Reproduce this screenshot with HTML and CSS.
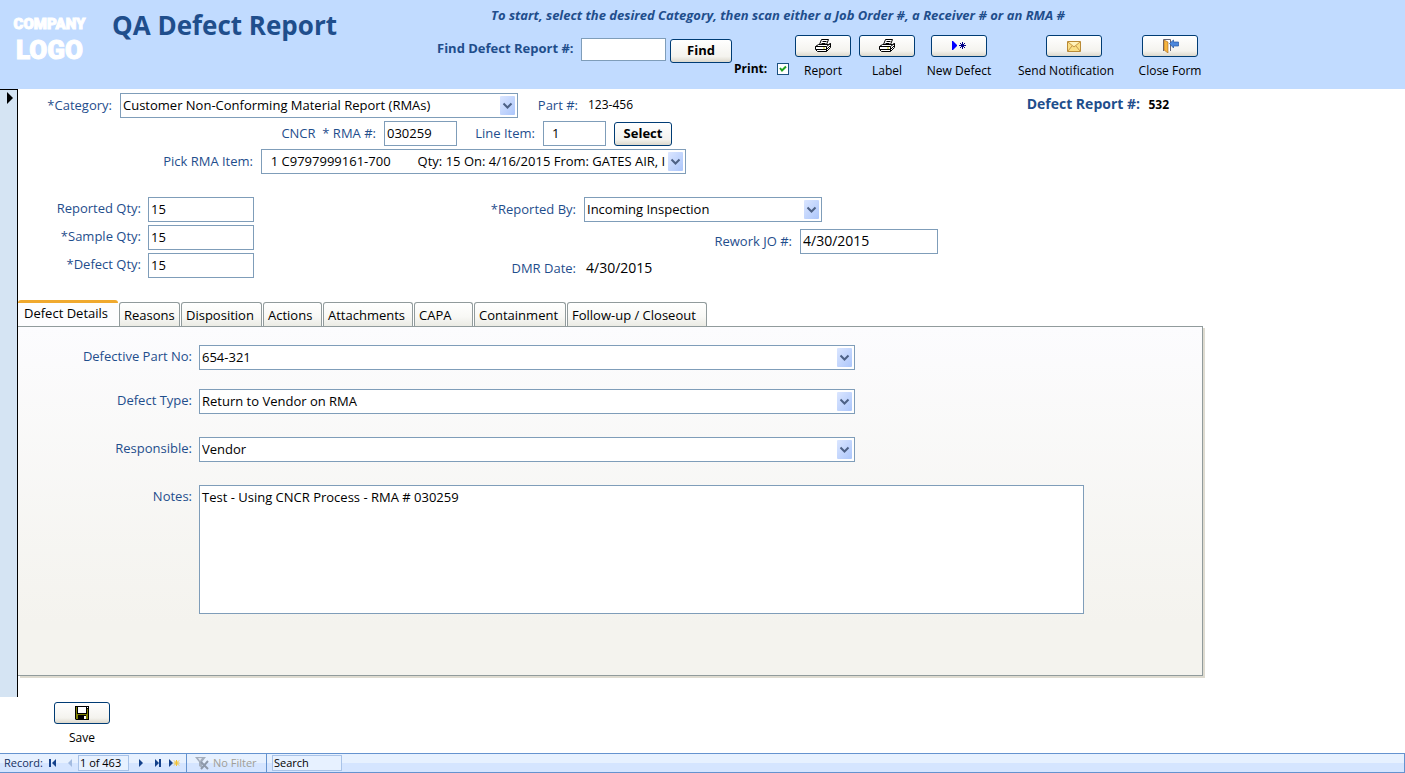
FILE: index.html
```html
<!DOCTYPE html>
<html lang="en">
<head>
    <meta charset="UTF-8">
    <meta name="viewport" content="width=device-width, initial-scale=1.0">
    <title>QA Defect Report</title>
    <link rel="stylesheet" href="styles.css">
</head>
<body>

    <header class="header">
        <div class="logo"><span class="logo-top">COMPANY</span><span class="logo-bottom">LOGO</span></div>
        <h1>QA Defect Report</h1>
        <div class="header-right">
            <p class="hint">To start, select the desired Category, then scan either a Job Order #, a Receiver # or an RMA #</p>
            <div class="tools">
                <label class="find-label" for="findReport">Find Defect Report #:</label>
                <input class="find-input" type="text" id="findReport" autofocus>
                <button class="btn find-btn" type="button">Find</button>
                <label class="print">Print: <input type="checkbox" checked></label>
                <div class="tool">
                    <button class="btn" type="button" id="report" aria-labelledby="reportText">
                        <svg width="16" height="14" viewBox="0 0 16 14" fill="#fff" stroke="#000"><path d="M4.500 5.500L6.500.5H13.500L11.500 5.500"/><path d="M7.500 2.500H11.500M6.500 4.500H10.500" stroke-width="1"/><path d="M.5 7.500L3.500 5.500H13.500L15.500 4.500V8.500L11.500 12.500H2.500L.5 10.500Z"/><path d="M.5 7.500H11.500L15.500 4.500M11.500 7.500V12.500M1 10.500H11.500L15.500 6.500" fill="none"/><path d="M8 9H10" stroke="#cc0"/></svg>
                    </button>
                    <span id="reportText">Report</span>
                </div>
                <div class="tool">
                    <button class="btn" type="button" aria-labelledby="labelText">
                        <svg width="16" height="14" viewBox="0 0 16 14" fill="#fff" stroke="#000"><path d="M4.500 5.500L6.500.5H13.500L11.500 5.500"/><path d="M7.500 2.500H11.500M6.500 4.500H10.500" stroke-width="1"/><path d="M.5 7.500L3.500 5.500H13.500L15.500 4.500V8.500L11.500 12.500H2.500L.5 10.500Z"/><path d="M.5 7.500H11.500L15.500 4.500M11.500 7.500V12.500M1 10.500H11.500L15.500 6.500" fill="none"/><path d="M8 9H10" stroke="#cc0"/></svg>
                    </button>
                    <span id="labelText">Label</span>
                </div>
                <div class="tool">
                    <button class="btn" type="button" aria-labelledby="newText">
                        <svg width="14" height="10" viewBox="0 0 14 10"><path d="M0 0H1L5 4V5L1 9H0Z" fill="#00f"/><path d="M10.500 1V8M7 4.500H14M8 2L13 7M13 2L8 7" stroke="#008"/></svg>
                    </button>
                    <span id="newText">New Defect</span>
                </div>
                <div class="tool tool-send">
                    <button class="btn" type="button" aria-labelledby="sendText">
                        <svg width="14" height="11" viewBox="0 0 14 11"><path d="M.5.5H13.500V10.500H.5Z" fill="#fbdf84" stroke="#b98a35"/><path d="M1 1L7 6L13 1M1 10L5 5M13 10L9 5" fill="none" stroke="#c4964a"/><path d="M2 1H12L7 5Z" fill="#fff2bd"/></svg>
                    </button>
                    <span id="sendText">Send Notification</span>
                </div>
                <div class="tool">
                    <button class="btn" type="button" aria-labelledby="closeText">
                        <svg width="17" height="14" viewBox="0 0 17 14"><path d="M1.500 12V.5H8.500V12" fill="#fff" stroke="#667"/><path d="M2 1L6 3V14L2 11Z" fill="#f6b53f" stroke="#a8671a" stroke-width=".6"/><path d="M7.500 4.500L11.500 1V3H16.500V7H11.500V9Z" fill="#4c87dc" stroke="#2558a5" stroke-width=".7"/></svg>
                    </button>
                    <span id="closeText">Close Form</span>
                </div>
            </div>
        </div>
    </header>

    <main class="main">
        <div class="selector">
            <svg width="6" height="12" viewBox="0 0 6 12"><path d="M0 0L6 6L0 12Z"/></svg>
        </div>

        <div class="form">
            <div class="top">
                <div class="row">
                    <label class="w-category" for="category">*Category:</label>
                    <select class="s-category" id="category"><option>Customer Non-Conforming Material Report (RMAs)</option></select>
                    <span class="name w-part">Part #:</span>
                    <span class="value">123-456</span>
                    <span class="report-no"><b>Defect Report #:</b> <strong>532</strong></span>
                </div>
                <div class="row">
                    <label class="w-rma" for="rma">CNCR &nbsp;* RMA #:</label>
                    <input class="i-rma" type="text" id="rma" value="030259">
                    <label class="w-line" for="lineItem">Line Item:</label>
                    <input class="i-line" type="text" id="lineItem" value="1">
                    <button class="btn select-btn" type="button">Select</button>
                </div>
                <div class="row">
                    <label class="w-pick" for="pick">Pick RMA Item:</label>
                    <select class="s-pick" id="pick"><option>&nbsp;&nbsp;1 C9797999161-700 &nbsp; &nbsp; &nbsp; &nbsp;Qty: 15 On: 4/16/2015 From: GATES AIR, INC</option></select>
                </div>
            </div>

            <div class="middle">
                <div class="qty">
                    <label for="reportedQty">Reported Qty:</label>
                    <input type="text" id="reportedQty" value="15">
                    <label for="sampleQty">*Sample Qty:</label>
                    <input type="text" id="sampleQty" value="15">
                    <label for="defectQty">*Defect Qty:</label>
                    <input type="text" id="defectQty" value="15">
                </div>
                <div class="people">
                    <div class="row">
                        <label class="w-by" for="reportedBy">*Reported By:</label>
                        <select class="s-by" id="reportedBy"><option>Incoming Inspection</option></select>
                    </div>
                    <div class="row rework">
                        <label for="reworkJo">Rework JO #:</label>
                        <input class="i-rework big" type="text" id="reworkJo" value="4/30/2015">
                    </div>
                    <div class="row">
                        <span class="name w-by">DMR Date:</span>
                        <span class="value big">4/30/2015</span>
                    </div>
                </div>
            </div>

            <div class="tabs" role="tablist">
                <button class="tab active" type="button" role="tab" aria-selected="true">Defect Details</button>
                <button class="tab" type="button" role="tab">Reasons</button>
                <button class="tab" type="button" role="tab">Disposition</button>
                <button class="tab" type="button" role="tab">Actions</button>
                <button class="tab" type="button" role="tab">Attachments</button>
                <button class="tab" type="button" role="tab">CAPA</button>
                <button class="tab" type="button" role="tab">Containment</button>
                <button class="tab" type="button" role="tab">Follow-up / Closeout</button>
            </div>
            <div class="panel" role="tabpanel">
                <label for="partNo">Defective Part No:</label>
                <select class="part-select" id="partNo"><option>654-321</option></select>
                <label for="defectType">Defect Type:</label>
                <select id="defectType"><option>Return to Vendor on RMA</option></select>
                <label for="responsible">Responsible:</label>
                <select id="responsible"><option>Vendor</option></select>
                <label for="notes">Notes:</label>
                <textarea id="notes">Test - Using CNCR Process - RMA # 030259</textarea>
            </div>
        </div>
    </main>

    <div class="actions">
        <div class="tool">
            <button class="btn" type="button" aria-labelledby="saveText">
                <svg width="14" height="14" viewBox="0 0 14 14"><path d="M0 0H14V14H1L0 13Z"/><path d="M1 1H2V8H12V3H13V13H11V9H3V13H1Z" fill="#808000"/><path d="M3 1H11V7H3Z" fill="#fff"/><path d="M9 10H11V13H9Z" fill="#fff"/><path d="M12 1H13V2H12Z" fill="#fff"/></svg>
            </button>
            <span id="saveText">Save</span>
        </div>
    </div>

    <footer class="nav">
        <div class="nav-group nav-record">
            <label for="recordNo">Record:</label>
            <button type="button" aria-label="First record"><svg width="8" height="8" viewBox="0 0 8 8"><path d="M1 0V8" stroke="#15428b" stroke-width="2"/><path d="M7 0V8L3 4Z" fill="#15428b"/></svg></button>
            <button type="button" aria-label="Previous record"><svg width="8" height="8" viewBox="0 0 8 8"><path d="M6 0V8L2 4Z" fill="#a3bbe0"/></svg></button>
            <input type="text" id="recordNo" value="1 of 463">
            <button type="button" aria-label="Next record"><svg width="8" height="8" viewBox="0 0 8 8"><path d="M2 0V8L6 4Z" fill="#15428b"/></svg></button>
            <button type="button" aria-label="Last record"><svg width="8" height="8" viewBox="0 0 8 8"><path d="M1 0V8L5 4Z" fill="#15428b"/><path d="M6 0V8" stroke="#15428b" stroke-width="2"/></svg></button>
            <button type="button" aria-label="New record"><svg width="11" height="8" viewBox="0 0 11 8"><path d="M0 0V8L4 4Z" fill="#15428b"/><path d="M7.500 1V7M4.500 4H10.500M5 1.500L10 6.500M10 1.500L5 6.500" stroke="#f2c230"/></svg></button>
        </div>
        <div class="nav-group nav-filter">
            <svg width="15" height="13" viewBox="0 0 15 13"><path d="M0 0H11L7 5V11L4 9V5Z" fill="#a4aebd"/><path d="M3 1H7L5 4Z" fill="#dfe5ee"/><path d="M6 5L13 12M13 4L6 12" stroke="#8e99aa" stroke-width="2"/></svg>
            <span>No Filter</span>
        </div>
        <div class="nav-group nav-search">
            <input type="text" value="Search" aria-label="Search">
        </div>
    </footer>

</body>
</html>
```
FILE: styles.css
```css
* {
    box-sizing: border-box;
}

body {
    margin: 0;
    min-height: 100vh;
    display: flex;
    flex-direction: column;
    background-color: #fff;
    font-family: "Open Sans", "Noto Sans", sans-serif;
    font-size: 13px;
    line-height: 18px;
    color: #000;
}

input, select, textarea, button {
    font: inherit;
    color: #000;
    margin: 0;
}

input, select, textarea {
    border: 1px solid #7f9db9;
    border-radius: 0;
    background-color: #fff;
    outline: none;
}

input, select {
    height: 25px;
    padding: 0 2px 2px;
}

select {
    appearance: none;
    padding-right: 20px;
    overflow: hidden;
    background-repeat: no-repeat;
    background-position: right 2px center;
    background-image: url("data:image/svg+xml,%3Csvg xmlns='http://www.w3.org/2000/svg' width='15' height='19'%3E%3ClinearGradient id='g' x2='1' y2='1'%3E%3Cstop stop-color='%23dbe6ff'/%3E%3Cstop offset='1' stop-color='%23acc6fb'/%3E%3C/linearGradient%3E%3Crect width='15' height='19' rx='1' fill='url(%23g)'/%3E%3Cpath d='M3.500 7.500L7.500 11.500L11.500 7.500' fill='none' stroke='%234d6185' stroke-width='2'/%3E%3C/svg%3E");
}

label, .name {
    color: #1f4e8c;
    text-align: right;
}

/* header */
.header {
    display: grid;
    grid-template-columns: 99px 325px 1fr;
    height: 89px;
    padding-left: 13px;
    background-color: #c1dbff;
}

.logo {
    display: flex;
    flex-direction: column;
    width: 73px;
    padding-top: 14px;
    align-items: center;
    color: #fff;
    font-family: Impact, Roboto, sans-serif;
    font-weight: 900;
    -webkit-text-stroke: 1px #fff;
}

.logo-top {
    font-size: 15px;
    line-height: 20px;
}

.logo-bottom {
    font-size: 26px;
    line-height: 32px;
}

h1 {
    margin: 0;
    padding-top: 7px;
    font-size: 26px;
    line-height: 36px;
    color: #1f4e8c;
}

.hint {
    margin: 0;
    padding: 6px 0 0 54px;
    font-size: 13px;
    font-style: italic;
    font-weight: bold;
    color: #1f4e8c;
}

.tools {
    display: grid;
    grid-template-columns: 144px 89px 64px 53px 72px 56px 88px 142px 50px;
    padding-top: 11px;
}

.find-label {
    font-weight: bold;
    text-align: left;
    padding-top: 4px;
}

.find-input {
    width: 85px;
    height: 23px;
    margin-top: 3px;
}

.btn {
    display: flex;
    align-items: center;
    justify-content: center;
    width: 56px;
    height: 22px;
    padding: 0 0 2px;
    border: 1px solid #003c74;
    border-radius: 3px;
    background: linear-gradient(#fff, #f4f3ee 75%, #dcd8cc);
    font-weight: bold;
}

.find-btn {
    width: 62px;
    height: 24px;
    margin-top: 4px;
}

.print {
    display: flex;
    gap: 10px;
    align-items: center;
    align-self: end;
    padding-bottom: 2px;
    font-size: 12px;
    font-weight: bold;
    color: #000;
}

.print input {
    appearance: none;
    flex: none;
    width: 12px;
    height: 12px;
    padding: 0;
    border-color: #1c5180;
    background: #fff url("data:image/svg+xml,%3Csvg xmlns='http://www.w3.org/2000/svg' width='8' height='8'%3E%3Cpath d='M1 3L3 5.500L7 1.500' fill='none' stroke='%2321a121' stroke-width='2'/%3E%3C/svg%3E") center no-repeat;
}

.tool {
    display: flex;
    flex-direction: column;
    align-items: center;
    gap: 5px;
    font-size: 12px;
    white-space: nowrap;
}

.tool .btn {
    padding: 0;
}

.tool-send span {
    padding-right: 16px;
}

/* form */
.main {
    display: flex;
}

.selector {
    width: 18px;
    padding: 2px 0 0 7px;
    border-top: 1px solid #000;
    border-right: 1px solid #000;
    background-color: #d5e4f3;
}

.selector svg {
    display: block;
}

.form {
    flex: 1;
    padding-bottom: 21px;
}

.top {
    display: flex;
    flex-direction: column;
    gap: 3px;
    max-width: 1187px;
    padding-top: 4px;
}

.row {
    display: flex;
    align-items: center;
}

.row label, .row .name {
    padding: 0 8px 2px 0;
    white-space: nowrap;
}

.w-category {
    width: 102px;
}

.s-category {
    width: 398px;
}

.w-part {
    width: 68px;
}

.value {
    font-size: 12px;
    padding: 0 0 2px 2px;
}

.big {
    font-size: 14px;
}

.report-no {
    margin-left: auto;
    padding: 0 36px 2px 0;
}

.report-no b {
    padding-right: 5px;
    font-size: 14px;
    color: #1f4e8c;
}

.report-no strong {
    font-size: 12px;
}

.w-rma {
    width: 366px;
}

.i-rma {
    width: 73px;
}

.w-line {
    width: 86px;
}

.i-line {
    width: 63px;
    padding-left: 8px;
}

.select-btn {
    width: 58px;
    height: 24px;
    margin-left: 8px;
}

.w-pick {
    width: 243px;
}

.s-pick {
    width: 425px;
}

.middle {
    display: flex;
    align-items: flex-start;
    padding-top: 23px;
}

.qty {
    display: grid;
    grid-template-columns: 123px 106px;
    gap: 3px 7px;
    align-items: center;
}

.qty label {
    padding-bottom: 3px;
}

.people {
    display: flex;
    flex-direction: column;
    width: 684px;
    gap: 5px;
}

.w-by {
    width: 330px;
}

.s-by {
    width: 238px;
}

.people .row:first-child {
    padding-bottom: 2px;
}

.rework {
    justify-content: flex-end;
}

.i-rework {
    width: 138px;
}

/* tabs */
.tabs {
    display: grid;
    grid-template-columns: 100px 61px 81px 59px 90px 59px 92px 140px;
    column-gap: 1px;
    align-items: end;
    height: 26px;
    margin-top: 21px;
}

.tab {
    height: 24px;
    padding: 0 4px;
    border: 1px solid #919b9c;
    border-bottom: 0;
    border-radius: 3px 3px 0 0;
    background: linear-gradient(#fff, #f8f8f5 60%, #ebebe4);
    white-space: nowrap;
    text-align: left;
}

.tab.active {
    height: 26px;
    padding: 0 6px 4px;
    border-width: 3px 0 0;
    border-color: #f0a92e;
    background: #fdfdfe;
}

.panel {
    display: grid;
    grid-template-columns: 174px minmax(0, 885px);
    column-gap: 7px;
    align-content: start;
    max-width: 1185px;
    min-height: 350px;
    padding: 18px 16px 61px 0;
    border: solid #919b9c;
    border-width: 1px 1px 1px 0;
    background: linear-gradient(#fcfcfe, #f4f3ee 85%);
    box-shadow: 2px 2px 0 #dedbd0;
}

.panel label {
    padding-top: 2px;
}

.panel select {
    width: 100%;
    max-width: 656px;
    margin-bottom: 23px;
}

.panel .part-select {
    margin-bottom: 19px;
}

.panel textarea {
    display: block;
    width: 100%;
    height: 129px;
    padding: 2px;
    resize: none;
}

.actions {
    display: flex;
    padding: 5px 54px;
}

/* record bar */
.nav {
    display: flex;
    height: 20px;
    margin-top: auto;
    border: 1px solid #6593cf;
    border-left: 0;
    background: linear-gradient(#e7f1ff 50%, #d5e5ff 50%);
    font-size: 11px;
}

.nav-group {
    display: flex;
    align-items: center;
    border-right: 1px solid #6593cf;
}

.nav label {
    color: #15305e;
    width: 40px;
    text-align: left;
}

.nav-record {
    width: 187px;
    padding-left: 4px;
}

.nav button {
    display: flex;
    justify-content: center;
    width: 17px;
    padding: 0;
    border: 0;
    background: none;
}

.nav input {
    height: 16px;
    padding: 0 1px;
    border-color: #a9c3e8;
    background-color: #e7f1ff;
}

.nav-record input {
    width: 51px;
    margin-right: 3px;
}

.nav-filter {
    width: 80px;
    padding-left: 8px;
    gap: 3px;
    color: #a09e96;
}

.nav-search {
    padding-left: 5px;
    border-right: 0;
}

.nav-search input {
    width: 70px;
}
```
